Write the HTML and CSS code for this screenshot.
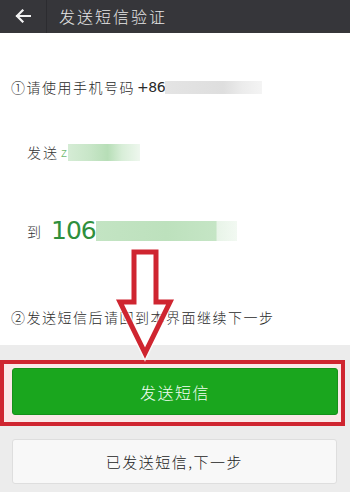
FILE: index.html
```html
<!DOCTYPE html>
<html lang="zh-CN">
<head>
    <meta charset="UTF-8">
    <meta name="viewport" content="width=device-width, initial-scale=1.0">
    <title>发送短信验证</title>
    <link rel="stylesheet" href="styles.css">
</head>
<body>
    <div class="page">
        <header class="top-bar">
            <button class="back-btn" title="返回">
                <svg width="16" height="14" viewBox="0 0 16 14">
                    <path d="M15 7H2M7.5 1.5L2 7l5.5 5.5" fill="none" stroke="#f2f2f2" stroke-width="2.2" stroke-linecap="square"/>
                </svg>
            </button>
            <h1 class="title">发送短信验证</h1>
        </header>

        <main class="content">
            <p class="step step-one">①请使用手机号码 <span class="prefix">+86</span><span class="blur blur-gray"></span></p>
            <p class="line line-send">发送 <span class="letter">z</span><span class="blur blur-green-a"></span></p>
            <p class="line line-to">到 <span class="code">106</span><span class="blur blur-green-b"></span></p>
            <p class="step step-two">②发送短信后请回到本界面继续下一步</p>
        </main>

        <footer class="actions">
            <div class="highlight">
                <button class="btn btn-primary">发送短信</button>
            </div>
            <button class="btn btn-default">已发送短信,下一步</button>
        </footer>

        <!-- annotation arrow drawn over the page -->
        <svg class="hint-arrow" width="350" height="492" viewBox="0 0 350 492">
            <polygon points="134,252 156,252 156,302 170,302 145,353 120,302 134,302"
                     fill="none" stroke="#fff" stroke-opacity="0.7" stroke-width="8" stroke-linejoin="miter"/>
            <polygon points="134,252 156,252 156,302 170,302 145,353 120,302 134,302"
                     fill="none" stroke="#cf2530" stroke-width="5" stroke-linejoin="miter"/>
        </svg>
    </div>
</body>
</html>
```

FILE: styles.css
```css
* {
    box-sizing: border-box;
}

html, body {
    margin: 0;
    padding: 0;
}

body {
    font-family: "Noto Sans CJK SC", "Noto Sans", sans-serif;
    font-weight: 300;
    background-color: #ececec;
    color: #2a2a2a;
}

.page {
    position: relative;
    width: 350px;
    height: 492px;
    overflow: hidden;
}

.top-bar {
    display: flex;
    align-items: center;
    height: 34px;
    background-color: #36363a;
    border-bottom: 1px solid #4a4a4e;
}

.back-btn {
    display: flex;
    align-items: center;
    justify-content: center;
    width: 47px;
    height: 100%;
    margin: 0;
    padding: 0 0 2px 0;
    background: none;
    border: none;
    border-right: 1px solid #2c2c30;
}

.title {
    margin: 0 0 0 12px;
    font-size: 16px;
    font-weight: 300;
    letter-spacing: 2px;
    color: #e6e6e6;
    line-height: 20px;
    padding-bottom: 2px;
}

.content {
    height: 312px;
    background-color: #ffffff;
    padding: 44px 0 0 0;
    margin-top: -1px;
}

.content p {
    margin: 0;
    display: flex;
    align-items: center;
    white-space: nowrap;
}

.step {
    font-size: 14px;
    line-height: 20px;
    letter-spacing: 1.5px;
    padding-left: 11px;
}

.prefix {
    font-family: "DejaVu Sans", sans-serif;
    font-weight: 400;
    font-size: 14px;
    letter-spacing: -0.5px;
    margin-left: 2px;
}

.step-two {
    margin-top: 61px !important;
}

.line {
    font-size: 14px;
    letter-spacing: 2px;
    padding-left: 27px;
    color: #333;
}

.line-send {
    margin-top: 45px !important;
    line-height: 20px;
}

.line-to {
    margin-top: 54px !important;
    line-height: 30px;
}

.letter {
    color: #6fba6f;
    font-size: 13px;
    letter-spacing: 0;
    margin-left: 2px;
}

.code {
    font-family: "DejaVu Sans", sans-serif;
    font-weight: 400;
    font-size: 25px;
    color: #2f8f3c;
    letter-spacing: -1px;
    margin-left: 8px;
}

.blur {
    display: inline-block;
}

.blur-gray {
    width: 97px;
    height: 13px;
    background: linear-gradient(90deg, #e4e4e4 0%, #dedede 60%, #ececec 80%, #f4f4f4 100%);
}

.blur-green-a {
    width: 72px;
    height: 17px;
    margin-left: 1px;
    background: linear-gradient(90deg, #d5ecd5 0%, #c8e6c8 30%, #b7deb7 55%, #d8eed8 75%, #eef7ee 100%);
}

.blur-green-b {
    width: 141px;
    height: 20px;
    background: linear-gradient(90deg, #c3e4c3 0%, #bde1bd 50%, #c5e5c5 85%, #e8f4e8 86%, #f2f9f2 100%);
}

.actions {
    padding-top: 15px;
}

.highlight {
    width: 345px;
    border: 4px solid #cf2530;
    background-color: #fbe8e8;
    padding: 4px 3px 7px 8px;
}

.btn {
    display: block;
    margin: 0;
    font-family: inherit;
    font-weight: 300;
    font-size: 16px;
    letter-spacing: 1.5px;
    border-radius: 3px;
}

.btn-primary {
    width: 326px;
    height: 47px;
    background-color: #1aa61e;
    border: 1px solid #16901a;
    color: #f4fff4;
}

.btn-default {
    width: 325px;
    height: 45px;
    margin: 13px 0 0 12px;
    background-color: #f8f8f8;
    border: 1px solid #dedede;
    color: #222;
    font-size: 15px;
}

.hint-arrow {
    position: absolute;
    left: 0;
    top: 0;
    pointer-events: none;
}
```
